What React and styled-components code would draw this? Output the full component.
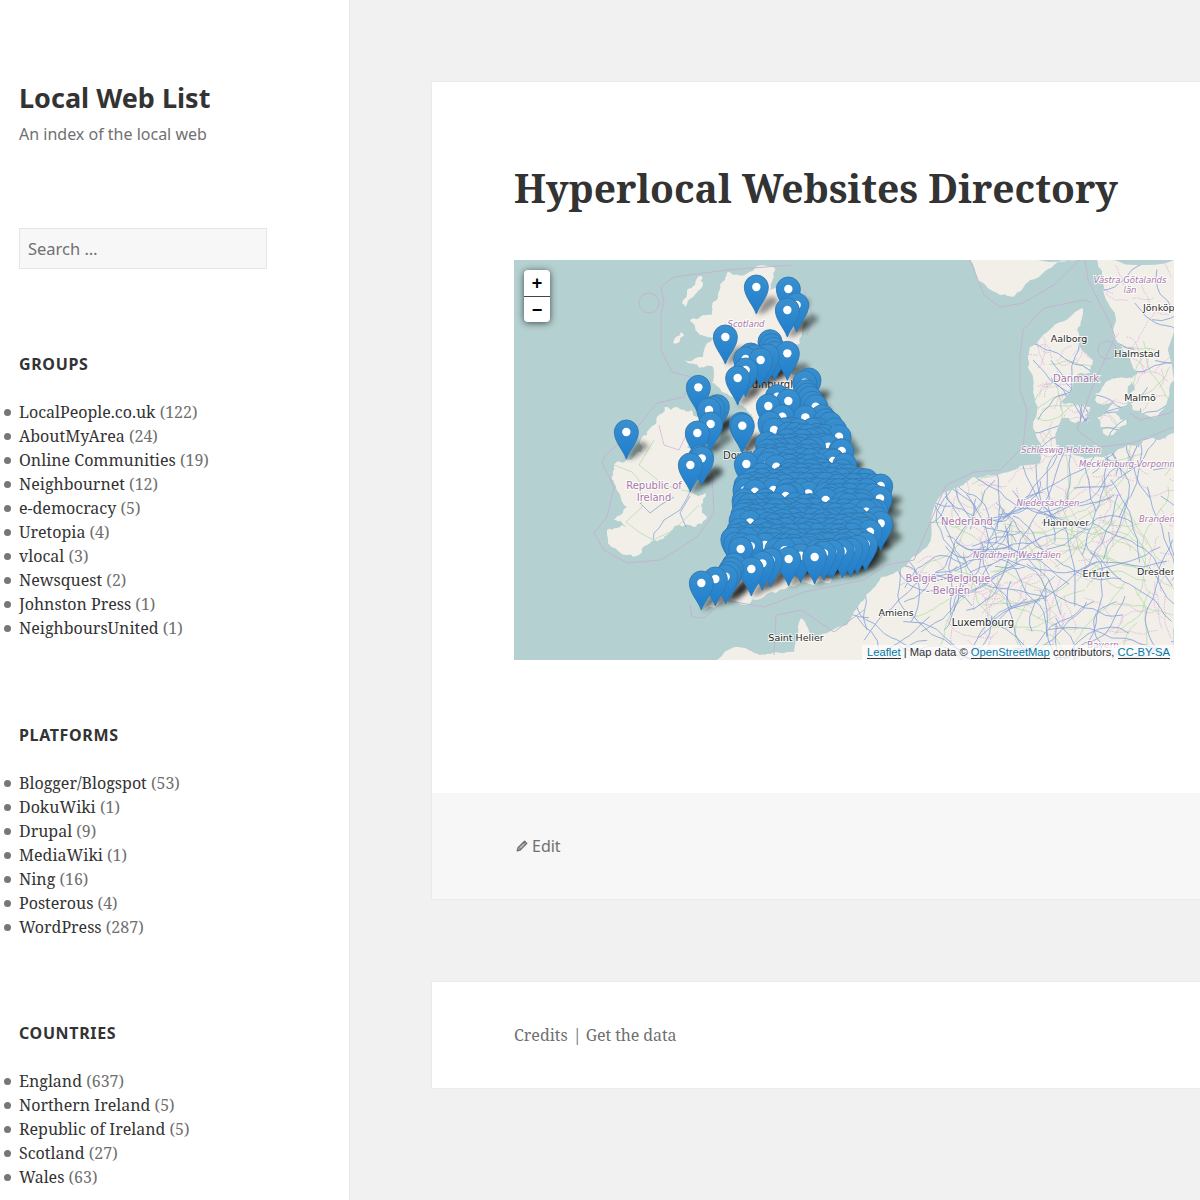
import React from "react"
import styled, { createGlobalStyle } from "styled-components"

const serif = `"Noto Serif", "DejaVu Serif", serif`
const sans = `"Noto Sans", sans-serif`

const GlobalStyle = createGlobalStyle`
  html, body { margin: 0; padding: 0; background: #f1f1f1; }
  #root { height: 1200px; overflow: hidden; }
  a { color: inherit; text-decoration: none; }
`

const Page = styled.div`
  display: flex;
  height: 1200px;
  width: 1200px;
  overflow: hidden;
`

const Sidebar = styled.aside`
  flex: 0 0 349px;
  box-sizing: content-box;
  background: #fff;
  border-right: 1px solid #e8e8e8;
  padding-top: 81px;
`

const SiteTitle = styled.h1`
  margin: 0 0 0 19px;
  font: 700 27px/34px ${sans};
  color: #333;
`

const Tagline = styled.p`
  margin: 7px 0 0 19px;
  font: 400 16px/24px ${sans};
  color: #707070;
`

const SearchInput = styled.input`
  display: block;
  box-sizing: border-box;
  width: 248px;
  height: 41px;
  margin: 82px 0 85px 19px;
  padding: 0 8px;
  background: #f7f7f7;
  border: 1px solid #e5e5e5;
  font: 400 16.5px ${sans};
  outline: none;
  &::placeholder { color: #707070; opacity: 1; }
`

const Widget = styled.section`
  margin: 0 0 ${p => p.$gap || 85}px 19px;
`

const WidgetTitle = styled.h2`
  margin: 0 0 26px;
  font: 700 16px/20px ${sans};
  letter-spacing: 0.04em;
  text-transform: uppercase;
  color: #333;
`

const List = styled.ul`
  margin: 0;
  padding: 0;
  list-style: none;
`

const Item = styled.li`
  position: relative;
  font: 400 16px/24px ${serif};
  color: #707070;
  white-space: nowrap;
  &::before {
    content: "";
    position: absolute;
    left: -15px;
    top: 9px;
    width: 7px;
    height: 7px;
    border-radius: 50%;
    background: #777;
  }
  a { color: #333; }
`

const Main = styled.main`
  flex: 1;
  min-width: 0;
  padding: 81px 0 0 81px;
`

const Card = styled.article`
  background: #fff;
  border: 1px solid #ebebeb;
  border-right: none;
  margin-bottom: 81px;
`

const CardBody = styled.div`
  padding: 81px 0 133px 82px;
`

const PageTitle = styled.h1`
  margin: 0 0 47px;
  font: 700 39px/50px ${serif};
  color: #333;
  white-space: nowrap;
`

const CardFooter = styled.footer`
  display: flex;
  align-items: center;
  gap: 4px;
  box-sizing: border-box;
  height: 106px;
  padding-left: 84px;
  background: #f7f7f7;
  font: 400 16px/20px ${sans};
  color: #707070;
`

const Credits = styled.div`
  display: flex;
  align-items: center;
  height: 106px;
  padding-left: 82px;
  font: 400 16px/24px ${serif};
  color: #707070;
  span { margin: 0 4px 0 5px; }
  a:last-child { letter-spacing: -0.08px; }
`

const MapBox = styled.div`
  position: relative;
  width: 660px;
  height: 400px;
  overflow: hidden;
  background: #b5d0d0;
`

const MapCanvas = styled.svg`
  display: block;
  width: 660px;
  height: 400px;
`

const ZoomBar = styled.div`
  position: absolute;
  left: 10px;
  top: 10px;
  width: 26px;
  border-radius: 4px;
  background: #fff;
  box-shadow: 0 1px 7px rgba(0, 0, 0, 0.65);
  overflow: hidden;
`

const ZoomButton = styled.a`
  display: block;
  height: 26px;
  font: 700 18px/26px "Liberation Sans", sans-serif;
  text-align: center;
  color: #000;
  & + & { border-top: 1px solid #444; height: 25px; }
`

const Attribution = styled.div`
  position: absolute;
  right: 0;
  bottom: 0;
  padding: 0 4px 0 5px;
  background: rgba(255, 255, 255, 0.7);
  font: 400 11.2px/15px "Liberation Sans", sans-serif;
  color: #333;
  white-space: nowrap;
  a { color: #0078a8; border-bottom: 1px solid #333; }
`

const CityLabel = styled.text`
  font: 400 ${p => p.$size || 10}px "DejaVu Sans", sans-serif;
  font-style: ${p => (p.$italic ? "italic" : "normal")};
  fill: ${p => (p.$admin ? "#a878a8" : "#2a2a2a")};
  stroke: rgba(255, 255, 255, 0.8);
  stroke-width: 2px;
  paint-order: stroke;
  text-anchor: ${p => p.$anchor || "middle"};
`

const groups = [
  ["LocalPeople.co.uk", 122], ["AboutMyArea", 24], ["Online Communities", 19], ["Neighbournet", 12],
  ["e-democracy", 5], ["Uretopia", 4], ["vlocal", 3], ["Newsquest", 2], ["Johnston Press", 1], ["NeighboursUnited", 1],
]
const platforms = [
  ["Blogger/Blogspot", 53], ["DokuWiki", 1], ["Drupal", 9], ["MediaWiki", 1], ["Ning", 16], ["Posterous", 4], ["WordPress", 287],
]
const countries = [
  ["England", 637], ["Northern Ireland", 5], ["Republic of Ireland", 5], ["Scotland", 27], ["Wales", 63],
]

const mulberry = seed => () => {
  seed = (seed + 0x6d2b79f5) | 0
  let t = Math.imul(seed ^ (seed >>> 15), 1 | seed)
  t = (t + Math.imul(t ^ (t >>> 7), 61 | t)) ^ t
  return ((t ^ (t >>> 14)) >>> 0) / 4294967296
}

// midpoint displacement, so the traced outlines get a coast-like edge
const roughen = (outline, amp, levels, seed) => {
  const r = mulberry(seed)
  let pts = outline.split(" ").map(p => p.split(",").map(Number))
  for (let l = 0; l < levels; l++) {
    const next = []
    pts.forEach((a, i) => {
      const b = pts[(i + 1) % pts.length]
      next.push(a)
      const dx = b[0] - a[0]
      const dy = b[1] - a[1]
      const d = (r() - 0.5) * amp
      next.push([(a[0] + b[0]) / 2 - dy * d, (a[1] + b[1]) / 2 + dx * d])
    })
    pts = next
  }
  return pts.map(p => `${p[0].toFixed(1)},${p[1].toFixed(1)}`).join(" ")
}

// land outlines, in map pixels
const britain = roughen("214,12 232,14 261,8 256,30 292,43 289,67 286,83 268,92 285,96 272,110 285,118 300,135 310,160 325,190 345,215 366,222 368,262 355,305 330,316 300,325 262,333 232,345 190,350 208,328 226,322 232,312 212,300 209,280 226,286 235,262 226,240 240,222 232,205 238,190 230,170 240,158 229,146 211,133 198,123 199,107 186,108 171,100 189,97 201,78 186,75 176,60 189,55 198,55 199,42 211,20", 0.4, 3, 3)
const skye = roughen("188,16 181,25 173,30 168,43 171,47 179,37 189,25", 0.5, 2, 4)
const uist = roughen("167,72 159,83 164,83 170,76", 0.5, 2, 5)
const ireland = roughen("133,175 143,157 163,147 177,150 187,167 173,187 173,213 177,233 192,233 193,257 180,267 153,275 133,285 113,295 93,270 113,267 100,260 113,247 100,223 100,207 113,200 130,175", 0.5, 3, 6)
const continent = roughen("203,400 222,387 240,393 262,392 280,392 287,358 300,378 333,365 350,340 367,317 386,310 413,287 429,233 459,217 489,213 526,203 528,187 519,167 524,147 519,133 514,107 516,87 529,75 556,57 569,48 563,70 566,87 579,100 576,113 566,113 556,133 546,143 549,157 543,170 543,187 560,195 586,197 603,190 626,185 633,177 646,180 660,173 660,400", 0.22, 3, 7)
const norway = roughen("456,0 463,20 486,35 499,37 516,20 544,2 563,0", 0.25, 3, 8)
const sweden = roughen("583,0 589,23 601,53 599,70 614,93 624,113 616,120 621,130 614,140 619,150 643,157 660,120 660,0", 0.3, 3, 9)
const danishIslands = [
  roughen("548,142 576,147 574,163 561,163 548,157", 0.5, 3, 10),
  roughen("581,133 599,117 616,117 614,143 601,153 614,160 599,175 589,173 583,157 601,143 583,143", 0.5, 3, 11),
]

const seaBorders = [
  "277,5 213,10 160,17 147,27 150,43 147,53 147,90 158,112 177,117 170,137 143,143 127,163 90,197 88,203 100,227 93,257 80,273 90,290 113,303 147,300 183,277 200,253 198,215 190,190",
  "176,345 178,357 190,358 210,340 250,347 290,332 350,320 372,305 400,300 418,258 432,225 460,212 486,210 499,197 509,187 513,150 506,130 506,97 509,70 530,48 569,40 577,42",
  "456,0 470,35 486,47 509,43 540,25 566,0",
  "571,0 574,20 596,63 601,77 586,110 576,133 563,170 586,187 619,183 660,167",
  "616,153 626,160 656,153 660,150",
  "260,395 262,355 288,350 320,372 350,350",
  "290,30 299,57 293,75",
]

const irishRoads = [
  ["#8aa6d6", "176,232 172,240 166,250 150,260 145,268 140,273 139,280"],
  ["#8aa6d6", "160,237 148,244 136,253 126,243"],
  ["#8aa6d6", "176,236 170,246 166,253 172,267"],
  ["#b4dcae", "100,205 118,212 125,220 128,247 112,262 125,272 139,280 160,270 185,245"],
  ["#b4dcae", "140,180 125,205 150,225 176,232"],
  ["#d8b4d8", "145,165 150,185 165,190 172,175"],
]

// road web for the continent: wandering polylines, clipped to the land
const wander = (rand, count, step, box) =>
  Array.from({ length: count }, () => {
    let x = box[0] + rand() * (box[2] - box[0])
    let y = box[1] + rand() * (box[3] - box[1])
    let a = rand() * Math.PI * 2
    const pts = [`${x.toFixed(1)},${y.toFixed(1)}`]
    const n = 6 + Math.floor(rand() * 12)
    for (let i = 0; i < n; i++) {
      a += (rand() - 0.5) * 0.9
      const len = step * (0.5 + rand())
      x += Math.cos(a) * len
      y += Math.sin(a) * len
      pts.push(`${x.toFixed(1)},${y.toFixed(1)}`)
    }
    return pts.join(" ")
  })

const rand = mulberry(42)
const allLand = [430, 210, 660, 400]
const blueRoads = [
  ...wander(rand, 70, 10, allLand),
  ...wander(rand, 30, 5, [425, 240, 520, 320]),
  ...wander(rand, 12, 7, [525, 90, 620, 190]),
  ...wander(rand, 8, 8, [600, 0, 660, 150]),
  ...wander(rand, 10, 9, [340, 340, 430, 400]),
]
const greenRoads = [...wander(rand, 45, 7, allLand), ...wander(rand, 10, 6, [520, 60, 660, 180])]
const pinkRoads = [
  ...wander(rand, 110, 3, allLand),
  ...wander(rand, 40, 2, [515, 80, 610, 175]),
  ...wander(rand, 16, 3, [590, 0, 660, 150]),
]

// pins whose white dot still shows, traced at 3x: head centre
const visibleDots = [
  [727, 81], [823, 87], [848, 135], [820, 150], [634, 231], [768, 245], [772, 257], [778, 268], [783, 280], [820, 280],
  [710, 285], [695, 297], [720, 290], [760, 288], [740, 300], [695, 330], [671, 354], [553, 382], [610, 440], [597, 445],
  [585, 450], [590, 492], [550, 519], [337, 516], [682, 493], [685, 497], [560, 590], [563, 595], [529, 615], [697, 612],
  [885, 360], [872, 368], [875, 395], [880, 405], [888, 415], [895, 430], [905, 440], [790, 410], [823, 423], [763, 438],
  [874, 472], [805, 470], [983, 573], [957, 603], [943, 560], [925, 470], [935, 482], [948, 492], [962, 510], [975, 530],
  [768, 490], [780, 510], [787, 620], [763, 612], [723, 695], [778, 690], [815, 708], [883, 700], [935, 720], [1100, 678],
  [1098, 715], [1057, 755], [708, 787], [753, 855], [680, 867], [1068, 815], [1100, 790], [1055, 852], [985, 873], [902, 891],
  [824, 897], [860, 887], [930, 880], [955, 876], [1010, 870], [1030, 862], [712, 927], [745, 910], [770, 900], [604, 957],
  [635, 950], [645, 940], [652, 928], [660, 915], [562, 969],
]

// crowd over England: [y, x from, x to] of head centres, at 3x
const crowdRows = [
  [510, 772, 912], [525, 768, 965], [540, 765, 975], [555, 762, 985], [570, 758, 993], [585, 755, 998], [600, 750, 998],
  [615, 748, 998], [630, 748, 1003], [645, 745, 1015], [660, 720, 1060], [675, 698, 1090], [690, 698, 1100], [705, 692, 1100],
  [720, 690, 1100], [735, 688, 1095], [750, 688, 1090], [765, 683, 1090], [780, 683, 1090], [795, 680, 1090], [810, 678, 1085],
  [825, 670, 1070], [840, 660, 1050], [855, 665, 1030], [870, 690, 1000],
]

const buildPins = () => {
  const r = mulberry(7)
  const front = visibleDots.map(([x, y]) => ({ x: x / 3, y: y / 3 + 27, fixed: true }))
  const crowd = []
  crowdRows.forEach(([y, from, to]) => {
    for (let x = from; x <= to; x += 20) {
      crowd.push({ x: (x + (r() - 0.5) * 12) / 3, y: (y + (r() - 0.5) * 8) / 3 + 27 })
    }
  })
  // a crowd pin in front of a traced dot would hide it
  const kept = crowd.filter(p =>
    !front.some(d => d.y < p.y && Math.hypot(d.x - p.x, d.y - p.y) < 12)
  )
  return [...kept, ...front].sort((a, b) => a.y - b.y)
}

const pins = buildPins()

const labels = [
  { t: "Edinburgh", x: 257, y: 128, s: 10 },
  { t: "Scotland", x: 232, y: 67, s: 8.5, admin: true, italic: true },
  { t: "Republic of", x: 140, y: 229, s: 10, admin: true },
  { t: "Ireland", x: 140, y: 241, s: 10, admin: true },
  { t: "Douglas", x: 209, y: 199, s: 10, anchor: "start" },
  { t: "Saint Helier", x: 282, y: 381, s: 9.5 },
  { t: "Amiens", x: 382, y: 356, s: 9.5 },
  { t: "Luxembourg", x: 469, y: 366, s: 10 },
  { t: "Nederland", x: 453, y: 265, s: 10, admin: true },
  { t: "Niedersachsen", x: 534, y: 246, s: 8.5, admin: true, italic: true },
  { t: "Hannover", x: 552, y: 266, s: 9.5 },
  { t: "Nordrhein-Westfalen", x: 503, y: 298, s: 8.5, admin: true, italic: true },
  { t: "België - Belgique", x: 434, y: 322, s: 10, admin: true },
  { t: "- Belgien", x: 434, y: 334, s: 10, admin: true },
  { t: "Erfurt", x: 582, y: 317, s: 9.5 },
  { t: "Dresden", x: 623, y: 315, s: 9.5, anchor: "start" },
  { t: "Bayern", x: 589, y: 388, s: 9, admin: true },
  { t: "Brandenburg", x: 625, y: 262, s: 8.5, admin: true, italic: true, anchor: "start" },
  { t: "Mecklenburg-Vorpommern", x: 565, y: 207, s: 8.5, admin: true, italic: true, anchor: "start" },
  { t: "Schleswig-Holstein", x: 547, y: 193, s: 8.5, admin: true, italic: true },
  { t: "Danmark", x: 562, y: 122, s: 10, admin: true },
  { t: "Malmö", x: 626, y: 141, s: 9.5 },
  { t: "Aalborg", x: 555, y: 82, s: 9.5 },
  { t: "Halmstad", x: 623, y: 97, s: 9.5 },
  { t: "Jönköping", x: 629, y: 51, s: 9.5, anchor: "start" },
  { t: "Västra Götalands", x: 616, y: 23, s: 8.5, admin: true, italic: true },
  { t: "län", x: 616, y: 33, s: 8.5, admin: true, italic: true },
]

const RoadLines = ({ lines, color, width = 0.8, dash }) => (
  <g fill="none" stroke={color} strokeWidth={width} strokeDasharray={dash} strokeLinejoin="round">
    {lines.map((pts, i) => <polyline key={i} points={pts} />)}
  </g>
)

const OsmMap = () => (
  <MapCanvas viewBox="0 0 660 400">
    <defs>
      <linearGradient id="pinFill" x1="0" y1="0" x2="0" y2="1">
        <stop offset="0" stopColor="#3a90cf" />
        <stop offset="1" stopColor="#1e7dcd" />
      </linearGradient>
      <filter id="pinBlur" x="-10%" y="-10%" width="120%" height="120%">
        <feGaussianBlur stdDeviation="2.4" />
      </filter>
      <clipPath id="landClip">
        <polygon points={continent} />
        <polygon points={sweden} />
        <polygon points={norway} />
        {danishIslands.map(p => <polygon key={p} points={p} />)}
      </clipPath>
      <g id="pin">
        <path
          d="M0 0C-3-9-12-17-12-27A12 12 0 1 1 12-27C12-17 3-9 0 0Z"
          fill="url(#pinFill)"
          stroke="#2f78b0"
          strokeWidth="0.9"
        />
        <circle cx="0" cy="-27" r="4.2" fill="#fff" />
      </g>
    </defs>

    <g fill="#f2efe9">
      {[britain, skye, uist, ireland, continent, norway, sweden, ...danishIslands].map(p => (
        <polygon key={p} points={p} />
      ))}
    </g>
    <g fill="none" stroke="#c2b5d2" strokeWidth="1" strokeLinejoin="round">
      {seaBorders.map(p => <polyline key={p} points={p} />)}
      <circle cx="135" cy="43" r="10" />
      <circle cx="593" cy="90" r="9" />
    </g>
    {irishRoads.map(([color, pts]) => (
      <polyline key={pts} points={pts} fill="none" stroke={color} strokeWidth="0.8" />
    ))}
    <g clipPath="url(#landClip)">
      <RoadLines lines={greenRoads} color="#abdca4" width={0.7} />
      <RoadLines lines={pinkRoads} color="#dcaedc" width={0.8} dash="1.5 1" />
      <RoadLines lines={blueRoads} color="#82a0d8" width={0.8} />
    </g>

    {labels.map(l => (
      <CityLabel key={l.t} x={l.x} y={l.y} $size={l.s} $admin={l.admin} $italic={l.italic} $anchor={l.anchor}>
        {l.t}
      </CityLabel>
    ))}

    <g filter="url(#pinBlur)" fill="#000">
      {pins.map((p, i) => (
        <path key={i} d={`M${p.x} ${p.y}l8 -1l13 -10q2 -5 -4 -6q-6 -1 -10 4z`} opacity="0.4" />
      ))}
    </g>
    {pins.map((p, i) => <use key={i} href="#pin" x={p.x} y={p.y} />)}
  </MapCanvas>
)

const PencilIcon = () => (
  <svg width="12" height="12" viewBox="0 0 12 12">
    <path d="M8.6 1.2l2.2 2.2-6.6 6.6-3 .8.8-3z" fill="#bbb" stroke="#707070" strokeWidth="1.3" strokeLinejoin="round" />
    <path d="M3 7.6l1.6 1.6M7.2 2.8l2 2" stroke="#707070" strokeWidth="1" />
  </svg>
)

const LinkList = ({ title, items, gap }) => (
  <Widget $gap={gap}>
    <WidgetTitle>{title}</WidgetTitle>
    <List>
      {items.map(([name, count]) => (
        <Item key={name}><a href="#">{name}</a> ({count})</Item>
      ))}
    </List>
  </Widget>
)

const App = () => (
  <Page>
    <GlobalStyle />
    <Sidebar>
      <SiteTitle>Local Web List</SiteTitle>
      <Tagline>An index of the local web</Tagline>
      <SearchInput placeholder="Search …" />
      <LinkList title="Groups" items={groups} />
      <LinkList title="Platforms" items={platforms} gap={84} />
      <LinkList title="Countries" items={countries} />
    </Sidebar>
    <Main>
      <Card>
        <CardBody>
          <PageTitle>Hyperlocal Websites Directory</PageTitle>
          <MapBox>
            <OsmMap />
            <ZoomBar>
              <ZoomButton>+</ZoomButton>
              <ZoomButton>−</ZoomButton>
            </ZoomBar>
            <Attribution>
              <a href="#">Leaflet</a> | Map data © <a href="#">OpenStreetMap</a> contributors, <a href="#">CC-BY-SA</a>
            </Attribution>
          </MapBox>
        </CardBody>
        <CardFooter>
          <PencilIcon />
          <a href="#">Edit</a>
        </CardFooter>
      </Card>
      <Card>
        <Credits>
          <a href="#">Credits</a><span>|</span><a href="#">Get the data</a>
        </Credits>
      </Card>
    </Main>
  </Page>
)

export default App
